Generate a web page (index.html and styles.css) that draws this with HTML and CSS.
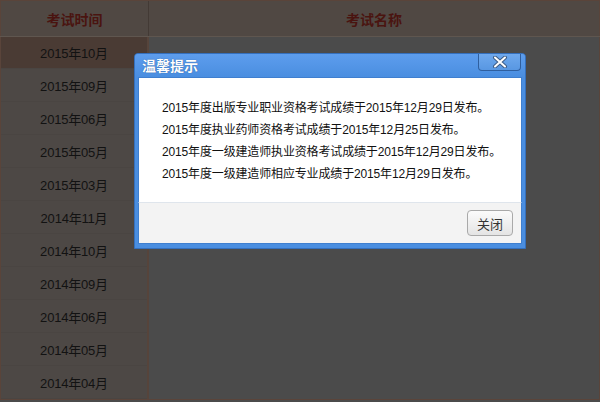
FILE: index.html
```html
<!DOCTYPE html>
<html lang="zh-CN">
<head>
<meta charset="utf-8">
<title>考试成绩</title>
<link rel="stylesheet" href="styles.css">
</head>
<body>
<div class="page">
  <div class="table">
    <div class="head">
      <div class="hcell hleft">考试时间</div>
      <div class="hcell hright">考试名称</div>
    </div>
    <div class="bodyrow">
      <ul class="months">
        <li class="active">2015年10月</li>
        <li>2015年09月</li>
        <li>2015年06月</li>
        <li>2015年05月</li>
        <li>2015年03月</li>
        <li>2014年11月</li>
        <li>2014年10月</li>
        <li>2014年09月</li>
        <li>2014年06月</li>
        <li>2014年05月</li>
        <li>2014年04月</li>
      </ul>
      <div class="names"></div>
    </div>
  </div>

  <div class="dialog">
    <div class="dtitle">
      <span class="dname">温馨提示</span>
      <span class="dclose">
        <svg width="16" height="12" viewBox="0 0 16 12">
          <path d="M3 1.5 L13 10.5 M13 1.5 L3 10.5" stroke="#3d5c86" stroke-width="4" stroke-linecap="round" fill="none"/>
          <path d="M3 1.5 L13 10.5 M13 1.5 L3 10.5" stroke="#ffffff" stroke-width="2" stroke-linecap="round" fill="none"/>
        </svg>
      </span>
    </div>
    <div class="dbody">
      <p>2015年度出版专业职业资格考试成绩于2015年12月29日发布。</p>
      <p>2015年度执业药师资格考试成绩于2015年12月25日发布。</p>
      <p>2015年度一级建造师执业资格考试成绩于2015年12月29日发布。</p>
      <p>2015年度一级建造师相应专业成绩于2015年12月29日发布。</p>
    </div>
    <div class="dfoot">
      <button class="btn">关闭</button>
    </div>
  </div>
</div>
</body>
</html>
```

FILE: styles.css
```css
html, body {
  margin: 0;
  padding: 0;
}
body {
  background: #4b4b4b;
  font-family: "Liberation Sans", "Noto Sans CJK SC", sans-serif;
  font-size: 12px;
  color: #111;
}
.page {
  position: relative;
  width: 600px;
  height: 402px;
  overflow: hidden;
}
.table {
  display: flex;
  flex-direction: column;
  height: 400px;
  border-top: 1px solid #5a443a;
  border-bottom: 1px solid #5a443a;
  box-sizing: border-box;
}
.head {
  display: grid;
  grid-template-columns: 149px 1fr;
  height: 36px;
  background: #504843;
  border-bottom: 1px solid #5f564f;
  box-sizing: border-box;
}
.hcell {
  display: flex;
  align-items: center;
  justify-content: center;
  font-family: "Noto Sans CJK SC", sans-serif;
  font-weight: bold;
  font-size: 14px;
  color: #4a1410;
}
.hleft {
  border-left: 1px solid #5a443a;
  border-right: 1px solid #433a35;
}
.hright {
  border-right: 1px solid #5a443a;
}
.bodyrow {
  flex: 1;
  display: grid;
  grid-template-columns: 149px 1fr;
}
.months {
  list-style: none;
  margin: 0;
  padding: 0;
  background: #4d4845;
  border-left: 1px solid #5a443a;
  border-right: 2px solid #56443b;
}
.months li {
  height: 33px;
  display: flex;
  align-items: center;
  justify-content: center;
  font-size: 13px;
  color: #121212;
  border-bottom: 1px solid #4a4542;
  box-sizing: border-box;
  letter-spacing: -0.2px;
}
.months li.active {
  background: #4a3b34;
  height: 32px;
}
.names {
  background: #4b4b4b;
  border-right: 1px solid #5a443a;
}

/* dialog overlays the page */
.dialog {
  position: absolute;
  left: 134px;
  top: 53px;
  width: 392px;
  height: 196px;
  display: flex;
  flex-direction: column;
  background: #4a8ee0;
  border: 1px solid #3570bd;
  border-radius: 4px 4px 0 0;
  box-sizing: border-box;
  padding: 0 3px 4px 3px;
}
.dtitle {
  height: 23px;
  display: flex;
  align-items: flex-start;
  justify-content: space-between;
  background: linear-gradient(#5d9ded, #4a8ee0);
  margin: 0 -3px;
  padding: 0 4px 0 7px;
  border-radius: 3px 3px 0 0;
}
.dname {
  font-family: "Noto Sans CJK SC", sans-serif;
  font-weight: bold;
  font-size: 14px;
  color: #fff;
  line-height: 23px;
  text-shadow: 0 0 1px #1f4f8f;
}
.dclose {
  width: 41px;
  height: 16px;
  display: flex;
  align-items: center;
  justify-content: center;
  background: linear-gradient(#6fa9ee, #5897e2);
  border: 1px solid #2f5f9f;
  border-top: none;
  border-radius: 0 0 4px 4px;
}
.dbody {
  flex: 1;
  background: #fff;
  padding: 19px 0 0 23px;
  border-top: 1px solid #3f7fcf;
  border-left: 1px solid #3f7fcf;
  border-right: 1px solid #3f7fcf;
}
.dbody p {
  margin: 0;
  height: 22px;
  line-height: 22px;
  font-size: 12px;
  color: #111;
  white-space: nowrap;
  letter-spacing: -0.15px;
}
.dfoot {
  height: 40px;
  background: #f3f3f3;
  border-top: 1px solid #dfe5ec;
  border-left: 1px solid #3f7fcf;
  border-right: 1px solid #3f7fcf;
  border-bottom: 1px solid #3f7fcf;
  display: flex;
  align-items: center;
  justify-content: flex-end;
  padding-right: 8px;
}
.btn {
  width: 46px;
  height: 26px;
  border: 1px solid #a9a9a9;
  border-radius: 4px;
  background: linear-gradient(#fbfbfb, #e4e4e4);
  font-family: "Noto Sans CJK SC", sans-serif;
  font-size: 13px;
  color: #333;
  padding: 0;
}
```
